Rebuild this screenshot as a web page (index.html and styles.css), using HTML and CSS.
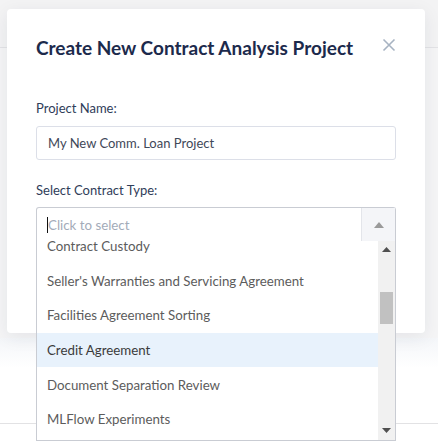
FILE: index.html
```html
<!DOCTYPE html>
<html>
<head>
<meta charset="utf-8">
<link rel="stylesheet" href="styles.css">
</head>
<body>
<div class="page">
  <div class="page-header"></div>
  <div class="page-band"></div>
  <div class="page-rest">
    <div class="page-rule"></div>
  </div>
</div>

<div class="modal">
  <div class="modal-head">
    <h2 class="modal-title">Create New Contract Analysis Project</h2>
    <svg class="close" width="14" height="14" viewBox="0 0 14 14"><path d="M1.5 1.5L12.5 12.5M12.5 1.5L1.5 12.5" stroke="#a7b3c2" stroke-width="1.6" fill="none"/></svg>
  </div>
  <label class="label">Project Name:</label>
  <div class="input">My New Comm. Loan Project</div>
  <label class="label label-2">Select Contract Type:</label>
  <div class="select">
    <div class="select-box">
      <div class="select-field"><span class="caret"></span><span class="placeholder">Click to select</span></div>
      <div class="select-toggle"><svg width="10" height="6" viewBox="0 0 10 6"><path d="M0 6L5 0L10 6Z" fill="#9a9a9a"/></svg></div>
    </div>
  </div>
</div>

<div class="dropdown">
  <div class="options">
    <div class="options-inner">
      <div class="option">Contract Custody</div>
      <div class="option">Seller's Warranties and Servicing Agreement</div>
      <div class="option">Facilities Agreement Sorting</div>
      <div class="option active">Credit Agreement</div>
      <div class="option">Document Separation Review</div>
      <div class="option">MLFlow Experiments</div>
    </div>
  </div>
  <div class="scrollbar">
    <svg class="arrow" width="9" height="5" viewBox="0 0 9 5"><path d="M0 5L4.5 0L9 5Z" fill="#505050"/></svg>
    <div class="track"><div class="thumb"></div></div>
    <svg class="arrow" width="9" height="5" viewBox="0 0 9 5"><path d="M0 0L4.5 5L9 0Z" fill="#505050"/></svg>
  </div>
</div>
</body>
</html>
```

FILE: styles.css
```css
* { box-sizing: border-box; }
html, body { margin: 0; padding: 0; }
body {
  width: 438px;
  height: 441px;
  overflow: hidden;
  position: relative;
  font-family: "Lato", "Liberation Sans", sans-serif;
  background: #ffffff;
}
.page { display: flex; flex-direction: column; height: 441px; }
.page-header { height: 48px; background: #f3f3f4; border-bottom: 1px solid #e3e3e6; }
.page-band { height: 290px; background: #f5f5f6; }
.page-rest { flex: 1; background: linear-gradient(#f4f6f9, #ffffff 30px); padding-top: 85px; }
.page-rule { height: 1px; background: #e2e2e4; }

.modal {
  position: absolute;
  left: 7px;
  top: 9px;
  width: 418px;
  height: 324px;
  background: #fff;
  border-radius: 4px;
  box-shadow: 0 4px 18px rgba(30, 40, 60, 0.08);
  padding: 27px 29px 0 29px;
}
.modal-head { display: flex; justify-content: space-between; align-items: flex-start; }
.modal-title {
  margin: 0;
  font-size: 19px;
  line-height: 24px;
  font-weight: 700;
  color: #1c2a4c;
  letter-spacing: 0;
}
.close { margin-top: 2px; margin-right: 0px; }
.label {
  display: block;
  margin-top: 40px;
  font-size: 13px;
  line-height: 16px;
  color: #2f3d59;
}
.label-2 { margin-top: 22px; }
.input {
  margin-top: 10px;
  height: 34px;
  border: 1px solid #dcdfe8;
  border-radius: 3px;
  padding: 0 11px;
  display: flex;
  align-items: center;
  font-size: 13px;
  color: #3f4858;
}
.select { margin-top: 9px; }
.select-box {
  height: 36px;
  border: 1px solid #c9ccd3;
  border-bottom-color: #dde0e6;
  border-radius: 3px 3px 0 0;
  display: flex;
}
.select-field { flex: 1; display: flex; align-items: center; padding-left: 10px; }
.caret { width: 1px; height: 16px; background: #111; }
.placeholder { font-size: 13.3px; color: #a3abb9; }
.select-toggle {
  width: 34px;
  background: #f4f5f8;
  border-left: 1px solid #e3e5ea;
  display: flex;
  align-items: center;
  justify-content: center;
}

.dropdown {
  position: absolute;
  left: 36px;
  top: 241px;
  width: 360px;
  height: 200px;
  background: #fff;
  border: 1px solid #c9ccd3;
  border-top: none;
  display: flex;
}
.options { flex: 1; overflow: hidden; }
.options-inner { margin-top: -12px; }
.option {
  height: 34.6px;
  padding-left: 10px;
  display: flex;
  align-items: center;
  font-size: 13.3px;
  color: #5c5c5c;
}
.option.active { background: #e8f2fc; color: #3b3b3b; }
.scrollbar {
  width: 17px;
  background: #f1f1f1;
  display: flex;
  flex-direction: column;
  align-items: center;
  padding: 6px 0 7px;
}
.track { flex: 1; width: 100%; padding: 0 2px; padding-top: 40px; }
.thumb { height: 32px; background: #c1c1c1; }
```
